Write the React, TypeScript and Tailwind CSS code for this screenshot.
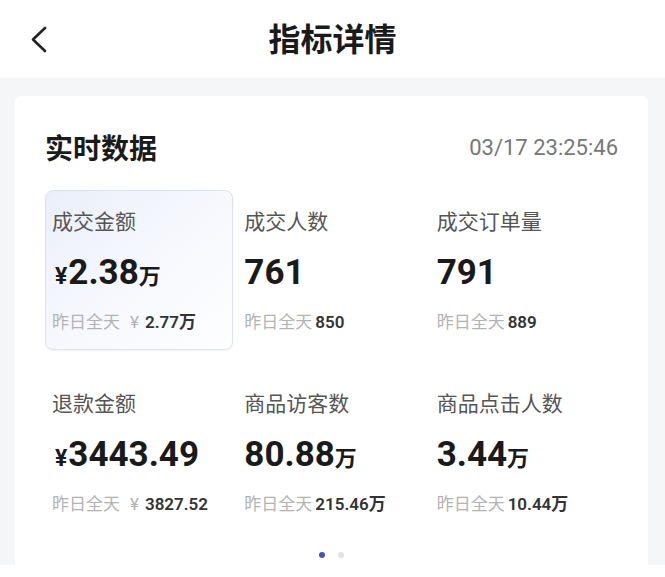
const metrics = [
  { label: '成交金额', prefix: '¥', value: '2.38', unit: '万', subPrefix: '¥', sub: '2.77万', active: true },
  { label: '成交人数', value: '761', sub: '850' },
  { label: '成交订单量', value: '791', sub: '889' },
  { label: '退款金额', prefix: '¥', value: '3443.49', subPrefix: '¥', sub: '3827.52' },
  { label: '商品访客数', value: '80.88', unit: '万', sub: '215.46万' },
  { label: '商品点击人数', value: '3.44', unit: '万', sub: '10.44万' },
];

const num = { fontFamily: 'Roboto, "Noto Sans CJK SC", sans-serif' };

function MetricCell({ m }: { m: (typeof metrics)[number] }) {
  return (
    <div
      className={`h-[160px] rounded-[8px] pl-[6px] pt-[15px] border ${
        m.active
          ? 'border-[#dfe3ec] bg-gradient-to-br from-[#ebeffa] via-[#f6f8fd] to-[#fefefe] shadow-[0_1px_2px_rgba(0,0,0,0.06)]'
          : 'border-transparent'
      }`}
    >
      <p className="text-[21px] leading-[28px] text-[#555]">{m.label}</p>
      <div className="mt-[19px] h-[40px] flex items-baseline text-[#1a1a1a]" style={num}>
        {m.prefix && <span className="text-[23px] font-bold ml-[3px] mr-[1px]">{m.prefix}</span>}
        <span className="text-[35px] leading-[40px] font-bold">{m.value}</span>
        {m.unit && <span className="text-[22px] font-semibold">{m.unit}</span>}
      </div>
      <div className="mt-[16px] h-[24px] flex items-baseline text-[17px] leading-[24px]">
        <span className="text-[#b3b3b3]">昨日全天</span>
        {m.subPrefix && <span className="text-[#b3b3b3] ml-[10px] mr-[6px]" style={num}>{m.subPrefix}</span>}
        <span className={`text-[#333] font-semibold ${m.subPrefix ? '' : 'ml-[3px]'}`} style={num}>{m.sub}</span>
      </div>
    </div>
  );
}

export default function App() {
  return (
    <div className="w-[665px] h-[577px] bg-white overflow-hidden" style={{ fontFamily: '"Noto Sans CJK SC", sans-serif' }}>
      {/* Header */}
      <header className="h-[78px] flex items-center relative bg-white">
        <button className="ml-[28px] w-[20px] h-[28px] flex items-center justify-center">
          <svg width="17" height="27" viewBox="0 0 17 27" fill="none">
            <path d="M15 2 L3 13.5 L15 25" stroke="#222" strokeWidth="2.6" strokeLinecap="round" strokeLinejoin="round" />
          </svg>
        </button>
        <h1 className="absolute left-1/2 -translate-x-1/2 top-[17px] text-[32px] leading-[40px] font-bold text-[#1a1a1a]">
          指标详情
        </h1>
      </header>

      {/* Body */}
      <div className="bg-[#f5f6f8] pl-[15px] pr-[17px] pt-[18px]">
        <div className="bg-white px-[30px] pt-[33px] pb-[7px] rounded-t-[6px]">
          <div className="flex items-center justify-between mb-[25px]">
            <h2 className="text-[28px] leading-[36px] font-semibold text-[#1a1a1a]">实时数据</h2>
            <span className="text-[22px] text-[#777]" style={num}>03/17 23:25:46</span>
          </div>

          <div className="grid grid-cols-3 gap-x-[4px] gap-y-[22px]">
            {metrics.map(m => (
              <MetricCell key={m.label} m={m} />
            ))}
          </div>

          <div className="flex justify-center gap-[13px] mt-[20px]">
            <span className="w-[6px] h-[6px] rounded-full bg-[#4351c4]" />
            <span className="w-[6px] h-[6px] rounded-full bg-[#e3e3e6]" />
          </div>
        </div>
      </div>
    </div>
  );
}
